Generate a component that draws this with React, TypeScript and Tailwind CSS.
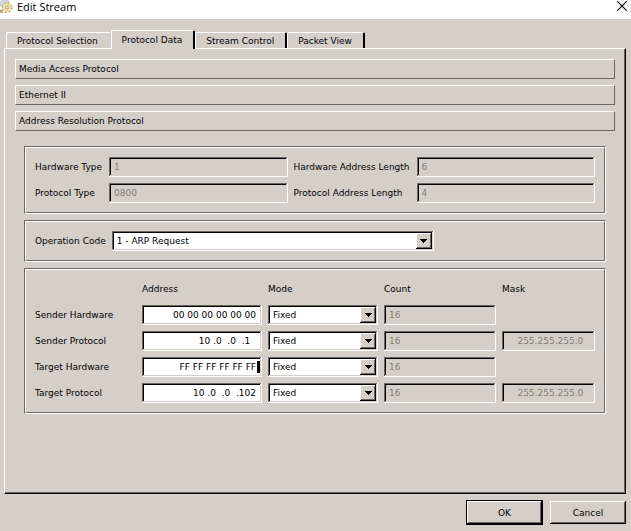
import React, { useState } from 'react';
import clsx from 'clsx';

const tabs = ['Protocol Selection', 'Protocol Data', 'Stream Control', 'Packet View'];

const sections = ['Media Access Protocol', 'Ethernet II', 'Address Resolution Protocol'];

const rows = [
  { label: 'Sender Hardware', address: '00 00 00 00 00 00', mask: '' },
  { label: 'Sender Protocol', address: '10 .0  .0  .1  ', mask: '255.255.255.0  ' },
  { label: 'Target Hardware', address: 'FF FF FF FF FF FF', mask: '', caret: true },
  { label: 'Target Protocol', address: '10 .0  .0  .102', mask: '255.255.255.0  ' },
];

const sunken =
  'shadow-[inset_-1px_-1px_0_#ffffff,inset_1px_1px_0_#6b6861,inset_-2px_-2px_0_#d4d0c8,inset_2px_2px_0_#000000]';

const raised =
  'shadow-[inset_-1px_-1px_0_#000000,inset_1px_1px_0_#ffffff,inset_-2px_-2px_0_#6b6861]';

function GearIcon() {
  return (
    <svg width="13" height="15" viewBox="0 0 13 15" aria-hidden="true" className="shrink-0">
      <circle cx="4" cy="3" r="4" fill="#d3d6d6" />
      <circle cx="4" cy="3" r="4.5" fill="none" stroke="#b9bcba" strokeWidth="1.4" strokeDasharray="1.9 1.6" />
      <circle cx="7" cy="7.5" r="4.4" fill="#ead9a8" />
      <circle cx="7" cy="7.5" r="4.7" fill="none" stroke="#c4a766" strokeWidth="1.6" strokeDasharray="2 1.7" />
      <circle cx="7" cy="7.5" r="3.7" fill="none" stroke="#f3e6bf" strokeWidth="1" />
      <circle cx="7" cy="7.5" r="1.6" fill="#d9dad4" stroke="#bda265" strokeWidth="0.7" />
      <path d="M0 9.5 L2.5 10.5 L3 13 L0 12.5 Z" fill="#b89b62" />
    </svg>
  );
}

interface FieldProps {
  id: string;
  value: string;
  label?: string;
  disabled?: boolean;
  right?: boolean;
}

function Field({ id, value, label, disabled, right }: FieldProps) {
  const [text, setText] = useState(value);
  return (
    <input
      id={id}
      type="text"
      aria-label={label}
      value={text}
      disabled={disabled}
      onChange={(e) => setText(e.target.value)}
      className={clsx(
        'block h-5 w-full min-w-0 pl-[5px] outline-none',
        sunken,
        disabled ? 'bg-[#d4d0c8] text-[#817e77]' : 'bg-white text-black',
        right ? 'pr-[6px] text-right' : 'pr-1'
      )}
    />
  );
}

function Combo({ id, label, options }: { id: string; label?: string; options: string[] }) {
  return (
    <div className="relative w-full min-w-0">
      <select
        id={id}
        aria-label={label}
        className={clsx('block h-5 w-full appearance-none bg-white pr-5 pl-[5px] text-black outline-none', sunken)}
      >
        {options.map((o) => (
          <option key={o}>{o}</option>
        ))}
      </select>
      <span
        className={clsx(
          'pointer-events-none absolute top-0.5 right-0.5 flex size-4 items-center justify-center bg-[#d4d0c8]',
          raised
        )}
      >
        <svg width="7" height="4" viewBox="0 0 7 4" shapeRendering="crispEdges" aria-hidden="true">
          <path d="M0 0h7v1h-1v1h-1v1h-1v1h-1v-1h-1v-1h-1v-1h-1z" fill="#000" />
        </svg>
      </span>
    </div>
  );
}

function Group({ children }: { children: React.ReactNode }) {
  return (
    <div className="border border-t-[#6b6861] border-r-white border-b-white border-l-[#6b6861]">
      <div className="border border-t-white border-r-[#6b6861] border-b-[#6b6861] border-l-white p-[9px]">
        {children}
      </div>
    </div>
  );
}

export default function App() {
  const [active, setActive] = useState('Protocol Data');

  return (
    <div className="flex min-h-screen flex-col bg-[#d4d0c8] font-['DejaVu_Sans',sans-serif] text-[9px] leading-3 text-black">
      <header className="flex h-[19px] items-start bg-white pr-1">
        <GearIcon />
        <h1 className="ml-1 flex-1 font-['Open_Sans',sans-serif] text-[11px] leading-[13px]">Edit Stream</h1>
        <button type="button" aria-label="Close" className="mt-px">
          <svg width="10" height="10" viewBox="0 0 10 10" aria-hidden="true">
            <path d="M0.3 0.3 L9.7 9.7 M9.7 0.3 L0.3 9.7" stroke="#000" strokeWidth="1.1" />
          </svg>
        </button>
      </header>

      <main className="flex flex-1 flex-col pt-[11px] pr-[5px] pb-1.5 pl-1">
        <div role="tablist" className="relative -mb-px flex items-end pl-0.5">
          {tabs.map((tab) => (
            <button
              key={tab}
              type="button"
              role="tab"
              aria-selected={tab === active}
              onClick={() => setActive(tab)}
              className={clsx(
                'rounded-t-xs border-t border-r-2 border-l border-white pr-[11px] pl-2.5 whitespace-nowrap',
                tab === active ? 'h-[19px] bg-[#d4d0c8] pb-px' : 'mb-px h-4',
                tab === 'Protocol Selection' ? 'border-r-transparent' : 'border-r-black'
              )}
            >
              {tab}
            </button>
          ))}
        </div>

        <section className="flex flex-1 flex-col border border-t-white border-r-black border-b-black border-l-white">
          <div className="flex-1 border-r border-b border-[#6b6861] pt-2.5 pr-[9px] pb-2.5 pl-2.5">
            <div className="flex flex-col gap-1.5">
              {sections.map((s) => (
                <button
                  key={s}
                  type="button"
                  className="h-5 border border-t-white border-r-[#6b6861] border-b-[#6b6861] border-l-white px-[3px] text-left"
                >
                  {s}
                </button>
              ))}
            </div>

            <div className="mt-[15px] flex flex-col gap-1.5 px-[9px]">
              <Group>
                <div className="grid grid-cols-[68px_1fr_117px_1fr] items-center gap-1.5 whitespace-nowrap">
                  <label htmlFor="hw-type">Hardware Type</label>
                  <Field id="hw-type" value="1" disabled />
                  <label htmlFor="hw-length">Hardware Address Length</label>
                  <Field id="hw-length" value="6" disabled />
                  <label htmlFor="proto-type">Protocol Type</label>
                  <Field id="proto-type" value="0800" disabled />
                  <label htmlFor="proto-length">Protocol Address Length</label>
                  <Field id="proto-length" value="4" disabled />
                </div>
              </Group>

              <Group>
                <div className="flex items-center gap-1.5">
                  <label htmlFor="op-code" className="whitespace-nowrap">
                    Operation Code
                  </label>
                  <div className="w-[322px]">
                    <Combo id="op-code" options={['1 - ARP Request', '2 - ARP Reply']} />
                  </div>
                </div>
              </Group>

              <Group>
                <div className="grid grid-cols-[101px_120fr_110fr_112fr_93fr] items-center gap-1.5 whitespace-nowrap">
                  <span className="h-5" />
                  <span>Address</span>
                  <span>Mode</span>
                  <span>Count</span>
                  <span>Mask</span>
                  {rows.map((row) => {
                    const id = row.label.toLowerCase().replace(' ', '-');
                    return (
                      <React.Fragment key={id}>
                        <label htmlFor={id}>{row.label}</label>
                        <div className="relative min-w-0">
                          <Field id={id} value={row.address} right />
                          {row.caret && <span className="absolute top-1 right-0.5 h-3 w-[3px] bg-black" />}
                        </div>
                        <Combo
                          id={`${id}-mode`}
                          label={`${row.label} Mode`}
                          options={['Fixed', 'Increment', 'Decrement']}
                        />
                        <Field id={`${id}-count`} label={`${row.label} Count`} value="16" disabled />
                        {row.mask ? (
                          <Field id={`${id}-mask`} label={`${row.label} Mask`} value={row.mask} disabled right />
                        ) : (
                          <span />
                        )}
                      </React.Fragment>
                    );
                  })}
                </div>
              </Group>
            </div>
          </div>
        </section>

        <footer className="mt-1.5 flex justify-end gap-1.5">
          <div className="w-[77px] border border-black">
            <button type="button" className={clsx('block h-[23px] w-full', raised)}>
              OK
            </button>
          </div>
          <div className="w-[77px] py-px pl-px">
            <button type="button" className={clsx('block h-[23px] w-full', raised)}>
              Cancel
            </button>
          </div>
        </footer>
      </main>
    </div>
  );
}
